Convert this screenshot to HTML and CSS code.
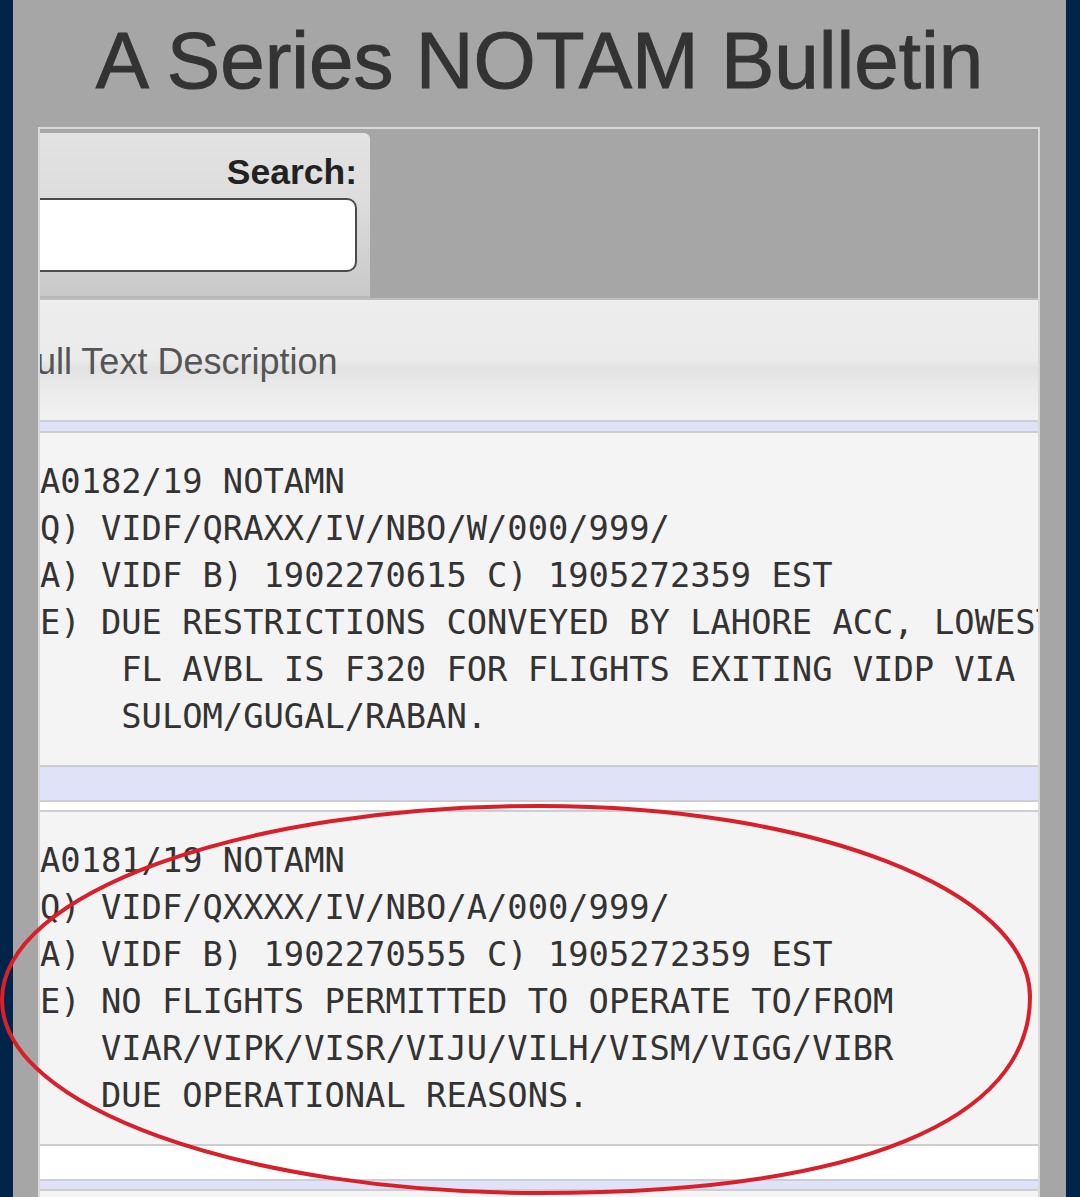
FILE: index.html
```html
<!DOCTYPE html>
<html lang="en">
  <head>
    <meta charset="UTF-8">
    <meta name="viewport" content="width=device-width, initial-scale=1.0">
    <title>A Series NOTAM Bulletin</title>
    <link rel="stylesheet" href="styles.css">
  </head>
  <body>
    <div class="page">
      <h1 class="title">A Series NOTAM Bulletin</h1>

      <div class="table-wrap">
        <div class="toolbar">
          <div class="search-panel">
            <label for="search">Search:</label>
            <input id="search" type="text" spellcheck="false">
          </div>
        </div>

        <div class="head-row"><span class="head-text">Full Text Description</span></div>
        <div class="strip lavender thin"></div>

        <pre class="notam">A0182/19 NOTAMN
Q) VIDF/QRAXX/IV/NBO/W/000/999/
A) VIDF B) 1902270615 C) 1905272359 EST
E) DUE RESTRICTIONS CONVEYED BY LAHORE ACC, LOWEST
    FL AVBL IS F320 FOR FLIGHTS EXITING VIDP VIA
    SULOM/GUGAL/RABAN.</pre>
        <div class="strip lavender tall"></div>
        <div class="strip white short"></div>

        <pre class="notam">A0181/19 NOTAMN
Q) VIDF/QXXXX/IV/NBO/A/000/999/
A) VIDF B) 1902270555 C) 1905272359 EST
E) NO FLIGHTS PERMITTED TO OPERATE TO/FROM
   VIAR/VIPK/VISR/VIJU/VILH/VISM/VIGG/VIBR
   DUE OPERATIONAL REASONS.</pre>
        <div class="strip white tall"></div>
        <div class="strip lavender short"></div>
        <div class="notam empty"></div>
      </div>
    </div>

    <!-- red marker drawn over the screenshot -->
    <svg class="marker" width="1080" height="1197" viewBox="0 0 1080 1197">
      <path d="M 2 1000 C 2 893, 243 806, 540 806 C 811 806, 1030 890, 1030 997 C 1030 1120, 860 1193, 540 1193 C 243 1193, 2 1107, 2 1000 Z"
            fill="none" stroke="#d81f2a" stroke-width="4"/>
    </svg>
  </body>
</html>
```

FILE: styles.css
```css
*{
    margin: 0;
    padding: 0;
    box-sizing: border-box;
}

body{
    position: relative;
    width: 1080px;
    height: 1197px;
    overflow: hidden;
    background: #00244a;
    font-family: "Liberation Sans", Arial, sans-serif;
}

.page{
    margin: 0 14px 0 13px;
    height: 1197px;
    background: #a6a6a6;
    overflow: hidden;
}

.title{
    padding-top: 21px;
    font-size: 80px;
    line-height: 79px;
    font-weight: normal;
    color: #333;
    -webkit-text-stroke: 1px #333; /* heading looks a bit heavier than regular */
    text-align: center;
}

.table-wrap{
    margin: 27px 26px 0 25px;
    border: 2px solid #d9d9d9;
    border-bottom: 0;
    overflow: hidden; /* table is scrolled sideways, left part is cut */
}

.toolbar{
    height: 171px;
    padding-top: 4px;
    background: #a6a6a6;
    border-bottom: 2px solid #bdbdbd;
}

.search-panel{
    width: 390px;
    height: 165px;
    margin-left: -60px;
    padding: 19px 13px 0 0;
    display: flex;
    flex-direction: column;
    align-items: flex-end;
    background: linear-gradient(#e3e3e3, #dcdcdc 45%, #c8c8c8);
    border-bottom: 2px solid #b7b7b7;
    border-radius: 0 6px 0 0;
}

.search-panel label{
    font-size: 35.5px;
    line-height: 40px;
    font-weight: bold;
    color: #222;
}

.search-panel input{
    width: 400px;
    height: 74px;
    margin-top: 6px;
    border: 2px solid #4b4b4b;
    border-radius: 10px;
    background: #fff;
    outline: 0;
}

.head-row{
    height: 122px;
    padding-top: 42px;
    font-size: 36px;
    line-height: 40px;
    color: #555;
    white-space: nowrap;
    background: linear-gradient(#ededed, #ebebeb 50%, #e2e2e2 56%, #ebebeb 75%, #f2f2f2);
    border-bottom: 2px solid #cfcfcf;
}

.head-text{
    display: inline-block;
    margin-left: -26px;
}

.strip{
    border-bottom: 2px solid #cdcdd2;
}

.lavender{
    background: #dfe2f8;
}

.white{
    background: #fff;
}

.thin{
    height: 11px;
}

.tall{
    height: 35px;
}

.short{
    height: 10px;
}

.notam{
    padding: 25px 0 25px;
    font-family: "DejaVu Sans Mono", monospace;
    font-size: 33.75px;
    line-height: 47px;
    color: #333;
    white-space: pre;
    background: #f4f4f4;
    border-bottom: 2px solid #cdcdcd;
}

.empty{
    height: 60px;
    border-bottom: 0;
}

.marker{
    position: absolute;
    top: 0;
    left: 0;
    pointer-events: none;
}
```
